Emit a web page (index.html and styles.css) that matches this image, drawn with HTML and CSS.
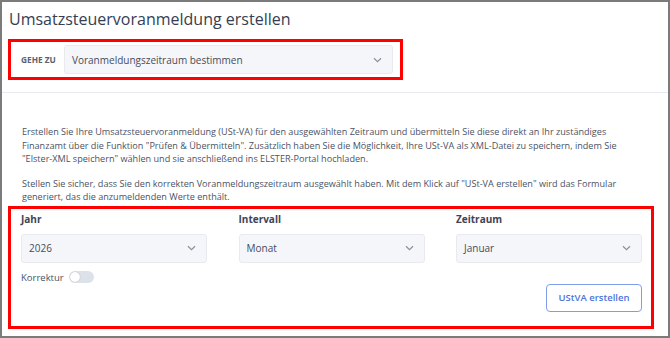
FILE: index.html
```html
<!DOCTYPE html>
<html lang="de">
<head>
<meta charset="utf-8">
<link rel="stylesheet" href="styles.css">
</head>
<body>
<div class="frame">
  <div class="header">
    <h1 class="title">Umsatzsteuervoranmeldung erstellen</h1>
    <div class="goto">
      <span class="goto-label">GEHE ZU</span>
      <div class="select goto-select">
        <span>Voranmeldungszeitraum bestimmen</span>
        <svg class="chev" width="9" height="6" viewBox="0 0 9 6"><path d="M1 1.2 L4.5 4.6 L8 1.2" fill="none" stroke="#8a909c" stroke-width="1.2"/></svg>
      </div>
    </div>
  </div>
  <div class="content">
    <p class="text">Erstellen Sie Ihre Umsatzsteuervoranmeldung (USt-VA) für den ausgewählten Zeitraum und übermitteln Sie diese direkt an Ihr zuständiges Finanzamt über die Funktion "Prüfen &amp; Übermitteln". Zusätzlich haben Sie die Möglichkeit, Ihre USt-VA als XML-Datei zu speichern, indem Sie "Elster-XML speichern" wählen und sie anschließend ins ELSTER-Portal hochladen.</p>
    <p class="text last">Stellen Sie sicher, dass Sie den korrekten Voranmeldungszeitraum ausgewählt haben. Mit dem Klick auf "USt-VA erstellen" wird das Formular generiert, das die anzumeldenden Werte enthält.</p>
    <div class="form">
      <div class="fields">
        <div class="field">
          <label class="field-label">Jahr</label>
          <div class="select">
            <span>2026</span>
            <svg class="chev" width="9" height="6" viewBox="0 0 9 6"><path d="M1 1.2 L4.5 4.6 L8 1.2" fill="none" stroke="#8a909c" stroke-width="1.2"/></svg>
          </div>
        </div>
        <div class="field">
          <label class="field-label">Intervall</label>
          <div class="select">
            <span>Monat</span>
            <svg class="chev" width="9" height="6" viewBox="0 0 9 6"><path d="M1 1.2 L4.5 4.6 L8 1.2" fill="none" stroke="#8a909c" stroke-width="1.2"/></svg>
          </div>
        </div>
        <div class="field">
          <label class="field-label">Zeitraum</label>
          <div class="select">
            <span>Januar</span>
            <svg class="chev" width="9" height="6" viewBox="0 0 9 6"><path d="M1 1.2 L4.5 4.6 L8 1.2" fill="none" stroke="#8a909c" stroke-width="1.2"/></svg>
          </div>
        </div>
      </div>
      <div class="korrektur">
        <span>Korrektur</span>
        <span class="toggle"><span class="knob"></span></span>
      </div>
      <div class="actions">
        <button class="btn">UStVA erstellen</button>
      </div>
    </div>
  </div>
</div>
</body>
</html>
```
FILE: styles.css
```css
* { box-sizing: border-box; }
html, body { margin: 0; padding: 0; background: #ffffff; }
body { font-family: "Open Sans", "Noto Sans", sans-serif; color: #4b5263; }
.frame {
  width: 670px;
  height: 338px;
  border: 2px solid #7b7b7b;
  overflow: hidden;
  background: #fff;
}
.header {
  padding: 4px 0 12px 6px;
  border-bottom: 1px solid #e6e9ef;
}
.title {
  margin: 0 0 7px 1px;
  font-size: 16px;
  font-weight: 400;
  line-height: 26px;
  color: #353e52;
}
.goto {
  width: 395px;
  height: 41px;
  border: 3px solid #ff0000;
  display: flex;
  align-items: center;
  padding: 0 7px 0 10px;
}
.goto-label {
  width: 43px;
  font-size: 8.3px;
  font-weight: 700;
  color: #5a6170;
}
.select {
  height: 29px;
  background: #f5f6f9;
  border: 1px solid #e8eaef;
  border-radius: 3px;
  display: flex;
  align-items: center;
  justify-content: space-between;
  padding: 0 10px 0 7px;
  font-size: 10px;
  color: #454c5c;
}
.goto-select { flex: 1; }
.chev { display: block; }
.content {
  padding: 32px 0 0 6px;
}
.text {
  margin: 0 0 11px 14px;
  width: 596px;
  font-size: 9.1px;
  line-height: 13.5px;
  color: #4b5263;
}
.text.last { margin-bottom: 2px; }
.form {
  width: 646px;
  height: 123px;
  border: 3px solid #ff0000;
  padding: 3px 9px 0 10px;
}
.fields {
  display: grid;
  grid-template-columns: 186px 186px 186px;
  column-gap: 31.5px;
}
.field-label {
  display: block;
  font-size: 10px;
  font-weight: 700;
  color: #3c4456;
  line-height: 14px;
  margin-bottom: 8px;
}
.korrektur {
  display: flex;
  align-items: center;
  gap: 5px;
  margin-top: 8px;
  font-size: 9.5px;
  color: #4b5263;
}
.toggle {
  width: 25px;
  height: 12px;
  border-radius: 6px;
  background: #dde1ea;
  display: flex;
  align-items: center;
  padding-left: 1px;
}
.knob {
  width: 10px;
  height: 10px;
  border-radius: 50%;
  background: #fff;
  box-shadow: 0 0 1px rgba(0,0,0,0.3);
}
.actions {
  display: flex;
  justify-content: flex-end;
}
.btn {
  width: 96px;
  height: 28px;
  border: 1px solid #7f9ee9;
  border-radius: 4px;
  background: #fff;
  color: #4c74da;
  font-family: "Open Sans", "Noto Sans", sans-serif;
  font-size: 9.5px;
  font-weight: 600;
  padding: 0;
}
```
